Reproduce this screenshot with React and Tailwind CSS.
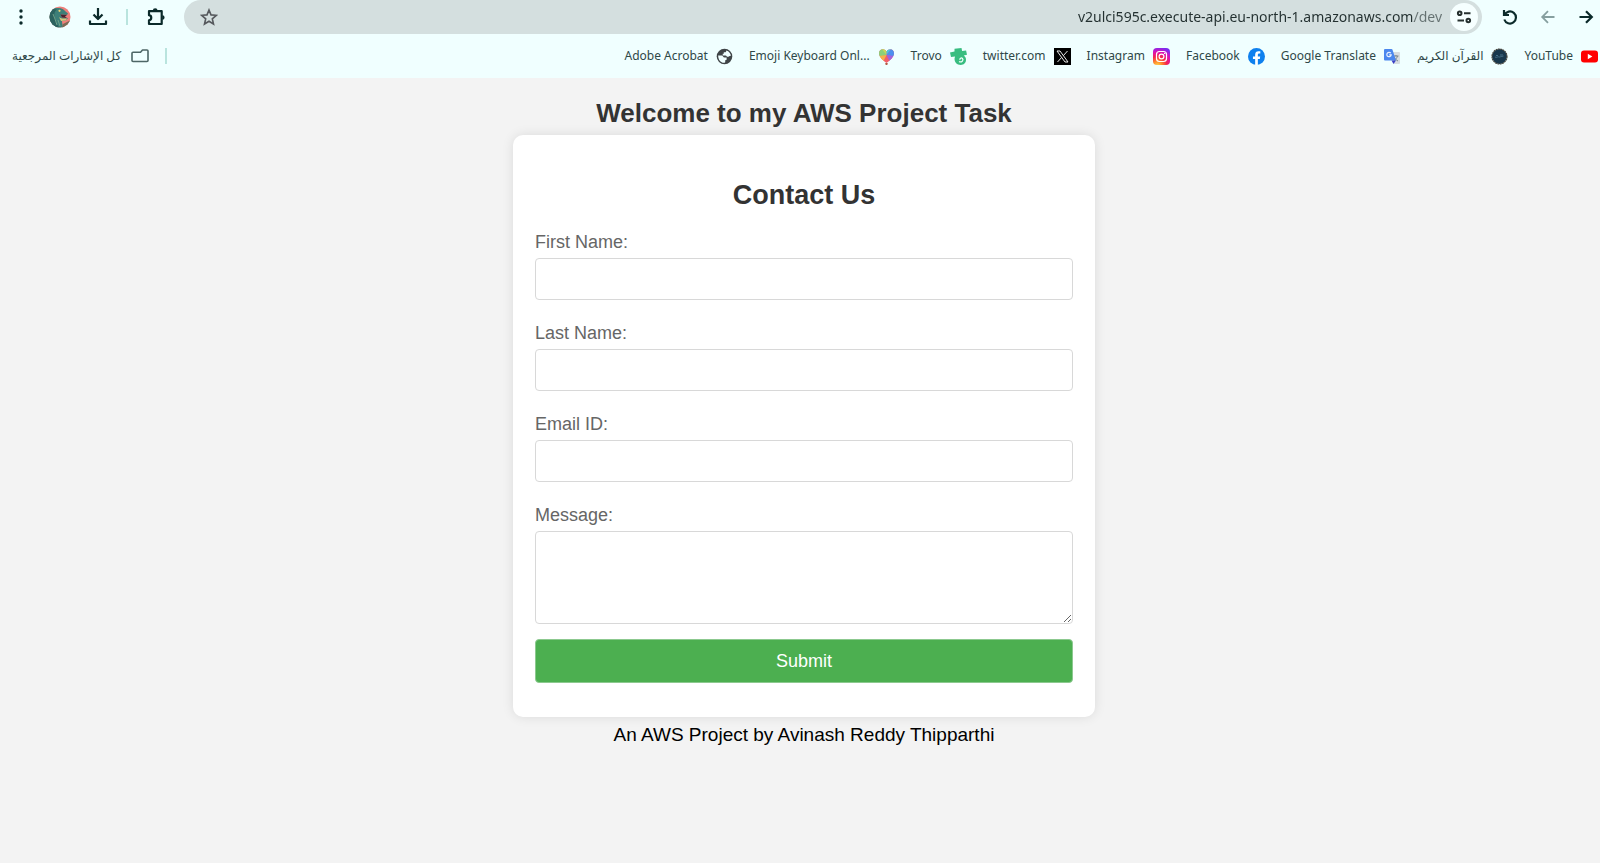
import React from "react";

const iconButton = "flex h-7 w-7 shrink-0 items-center justify-center rounded-full";

function DotsIcon() {
  return (
    <svg width="20" height="20" viewBox="0 0 20 20" fill="#0b2a2a">
      <circle cx="10" cy="4" r="1.7" />
      <circle cx="10" cy="10" r="1.7" />
      <circle cx="10" cy="16" r="1.7" />
    </svg>
  );
}

function AvatarIcon() {
  return (
    <svg width="22" height="22" viewBox="0 0 22 22">
      <defs>
        <clipPath id="avatar-clip">
          <circle cx="11" cy="11" r="10.5" />
        </clipPath>
      </defs>
      <g clipPath="url(#avatar-clip)">
        <rect width="22" height="22" fill="#ee7f7a" />
        <path d="M0 22V7C1 4 4 2 8 2c4-.5 7 1 8 3l3 2.500-1 1.500-6-.500 1 3 6 .500-2 2.500-4 .5c0 3 1 4 1 7z" fill="#3d7f78" />
        <path d="M0 7l4-4 4 .500C5 6 5 8 6 12l4 10H0z" fill="#2c625f" />
        <path d="M11.500 8.500l6.500.500-2 1.500 2 1.500-5-.500z" fill="#4a2430" />
        <path d="M10 11c2 2 4 1.500 8 1.500l-1 2-5 .500z" fill="#d8c27c" />
        <path d="M4 8l2 5 2 6M9 14l2 6" stroke="#6fa089" strokeWidth="1" fill="none" />
        <circle cx="10.500" cy="4.800" r="1.100" fill="#f0d470" />
        <path d="M14 18l8-4v8h-9z" fill="#7b6b56" />
      </g>
    </svg>
  );
}

function DownloadIcon() {
  return (
    <svg width="20" height="20" viewBox="0 0 20 20" fill="none" stroke="#0b2a2a" strokeWidth="2.200">
      <path d="M10 1v10.500M5.500 7.500l4.500 4.500 4.500-4.500M2 13.500V17h16v-3.500" strokeLinejoin="round" />
    </svg>
  );
}

function PuzzleIcon() {
  return (
    <svg width="20" height="20" viewBox="0 0 20 20">
      <path
        d="M3 4.200H15.700V17H3V13.300C6 12.900 6 8.600 3 8.200Z"
        fill="none"
        stroke="#0b2a2a"
        strokeWidth="2.200"
        strokeLinejoin="round"
      />
      <path d="M6.800 3.700a2.400 2.400 0 0 1 4.800 0ZM16.300 8.200a2.300 2.300 0 0 1 0 4.600Z" fill="#0b2a2a" />
    </svg>
  );
}

function StarIcon() {
  return (
    <svg width="18" height="18" viewBox="0 0 18 18" fill="none" stroke="#56595d" strokeWidth="1.600">
      <path d="M9 2l2 4.900 5.300.400-4 3.500 1.200 5.200L9 13.200 4.500 16l1.200-5.200-4-3.500L7 6.900z" />
    </svg>
  );
}

function TuneIcon() {
  return (
    <svg width="16" height="16" viewBox="0 0 16 16" fill="none" stroke="#26302f" strokeWidth="2">
      <circle cx="3.700" cy="4.300" r="1.800" />
      <path d="M8 4.300h6.500M1.500 11.500H8" />
      <circle cx="12.300" cy="11.500" r="1.800" />
    </svg>
  );
}

function ReloadIcon() {
  return (
    <svg width="18" height="18" viewBox="0 0 18 18" fill="none" stroke="#0b2a2a" strokeWidth="2.200">
      <path d="M3 2v5h5M3.500 7A6 6 0 1 1 3.300 11.500" />
    </svg>
  );
}

function ArrowIcon({ back }) {
  return back ? (
    <svg width="16" height="16" viewBox="0 0 16 16" fill="none" stroke="#869f9f" strokeWidth="1.800">
      <path d="M14.500 8H2.500M8 2.200L2.200 8 8 13.800" />
    </svg>
  ) : (
    <svg width="16" height="16" viewBox="0 0 16 16" fill="none" stroke="#0b2a2a" strokeWidth="2.200">
      <path d="M1.500 8h12M8 2.200L13.800 8 8 13.800" />
    </svg>
  );
}

function FolderIcon() {
  return (
    <svg width="18" height="14" viewBox="0 0 18 14" fill="none" stroke="#4d6666" strokeWidth="1.600">
      <path d="M2 3.200h7.500L11.500 1H16q1 0 1 1v9.500q0 1-1 1H2q-1 0-1-1V4.200q0-1 1-1z" strokeLinejoin="round" />
    </svg>
  );
}

function GlobeIcon() {
  return (
    <svg width="17" height="17" viewBox="0 0 24 24">
      <circle cx="12" cy="12" r="11" fill="#3f4447" />
      <path
        d="M3 10.500h5c2 0 2 3 4 3h3v2.500c0 1-1 1-2 1.500v2.500c-1 1-3 1-5 0C5 18.500 3 15 3 10.500zM14.500 3.500c0 1.500-.500 2.500-2 2.500H11v2H9.500v2.500h4c1.500 0 1.500 2 3 2 2 0 2-1.500 4.500-1.500 0-3-2.500-6.500-6.500-7.500z"
        fill="#f0ffff"
      />
    </svg>
  );
}

function HeartIcon() {
  return (
    <svg width="17" height="17" viewBox="0 0 17 17">
      <defs>
        <clipPath id="heart-clip">
          <path d="M8.500 15C5 12.500 1 9 1 5.200 1 .500 6.700 0 8.500 3.400 10.300 0 16 .500 16 5.200 16 9 12 12.500 8.500 15z" />
        </clipPath>
      </defs>
      <g clipPath="url(#heart-clip)">
        <rect width="17" height="17" fill="#f2606a" />
        <path d="M8.500 7L0 9V0h5z" fill="#8bd17a" />
        <path d="M8.500 7L3 0h6z" fill="#c5d95a" />
        <path d="M8.500 7V0H14z" fill="#45c5e8" />
        <path d="M8.500 7L14 0h3v9z" fill="#4c8ff0" />
        <path d="M8.500 7L17 8l-5 6z" fill="#a064dc" />
        <path d="M8.500 7L0 8v5l5 1z" fill="#f6b04a" />
      </g>
      <path d="M7.200 15h2.600l-.500 2H7.700z" fill="#b25b45" />
    </svg>
  );
}

function TrovoIcon() {
  return (
    <svg width="17" height="17" viewBox="0 0 17 17">
      <path
        d="M4.500.800L11.500 0l.600 3 4-.400.900 4.200-3.300.800C15.500 8.800 16 10 16 11.800c0 3.200-2.300 5.200-5.200 5.200-3.800 0-6.300-2.700-6.300-6.200L5 8.500 1 9 0 4.500l4.500-.900z"
        fill="#38bd80"
      />
      <path d="M9 13.500c2.500 1.500 5-1.300 3.500-3-1.200-1.200-3.200 0-2.400 1.400" fill="none" stroke="#effffc" strokeWidth="1.200" />
    </svg>
  );
}

function XIcon() {
  return (
    <svg width="17" height="17" viewBox="0 0 17 17">
      <rect width="17" height="17" fill="#000" />
      <path d="M3 3h3l8 11h-3zM13.500 3L9.300 7.700M7.600 9.500L3.500 14" fill="none" stroke="#e8e8e8" strokeWidth="1" />
    </svg>
  );
}

function InstagramIcon() {
  return (
    <svg width="17" height="17" viewBox="0 0 17 17">
      <defs>
        <radialGradient id="ig" cx="0.270" cy="1.050" r="1.100">
          <stop offset="0" stopColor="#ffd84d" />
          <stop offset="0.250" stopColor="#ff8a2b" />
          <stop offset="0.500" stopColor="#f5244e" />
          <stop offset="0.750" stopColor="#dc10b4" />
          <stop offset="1" stopColor="#7a2cf0" />
        </radialGradient>
      </defs>
      <rect width="17" height="17" rx="4" fill="url(#ig)" />
      <g fill="none" stroke="#fff" strokeWidth="1.200">
        <rect x="3.500" y="3.500" width="10" height="10" rx="3" />
        <circle cx="8.500" cy="8.500" r="2.400" />
      </g>
      <circle cx="11.600" cy="5.400" r=".7" fill="#fff" />
    </svg>
  );
}

function FacebookIcon() {
  return (
    <svg width="17" height="17" viewBox="0 0 24 24">
      <circle cx="12" cy="12" r="12" fill="#0f80ee" />
      <path
        d="M16.700 15.500l.500-3.500h-3.300V9.800c0-1 .500-1.900 2-1.900h1.500V4.900s-1.400-.200-2.700-.200c-2.800 0-4.600 1.700-4.600 4.700V12H7v3.500h3.100V24h3.800v-8.500z"
        fill="#fff"
      />
    </svg>
  );
}

function TranslateIcon() {
  return (
    <svg width="17" height="17" viewBox="0 0 17 17">
      <path d="M7 4h8q1 0 1 1v10q0 1-1 1H10z" fill="#d7dce0" />
      <path d="M9.500 8h5M12 7v1M13.500 8c-.500 2-2 3.500-3.500 4.500M10.500 9.500c.500 1.500 2 2.700 3.500 3.500" stroke="#7a858c" strokeWidth="1" fill="none" />
      <path d="M1 1h6.500q.700 0 1 .800L12 12.500H1q-1 0-1-1V2q0-1 1-1z" fill="#4b87ee" />
      <path d="M7.500 12.500H12L9.500 16z" fill="#3b3fc4" />
      <path d="M6.800 5.200A2.200 2.200 0 1 0 7.200 6.900H5.200" stroke="#e9f1ff" strokeWidth="1.200" fill="none" />
    </svg>
  );
}

function QuranIcon() {
  return (
    <svg width="17" height="17" viewBox="0 0 17 17">
      <circle cx="8.500" cy="8.500" r="7.500" fill="#18374c" />
      <circle cx="8.500" cy="8.500" r="7.500" fill="none" stroke="#4a463c" strokeWidth="1.200" strokeDasharray="1.800 0.600" />
      <path d="M4 9.500c1-1 1.500.500 2.500-.500s1 .500 2 0 1 0 2-.500 1 .500 2-.500M5 7.500h2M9 7h3" fill="none" stroke="#527c94" strokeWidth=".8" />
    </svg>
  );
}

function YouTubeIcon() {
  return (
    <svg width="17" height="17" viewBox="0 0 17 17">
      <rect y="2.500" width="17" height="12" rx="3" fill="#f00" />
      <path d="M6.800 5.800v5.400l4.600-2.700z" fill="#fff" />
    </svg>
  );
}

const bookmarks = [
  { label: "Adobe Acrobat", Icon: GlobeIcon },
  { label: "Emoji Keyboard Onl...", Icon: HeartIcon },
  { label: "Trovo", Icon: TrovoIcon },
  { label: "twitter.com", Icon: XIcon },
  { label: "Instagram", Icon: InstagramIcon },
  { label: "Facebook", Icon: FacebookIcon },
  { label: "Google Translate", Icon: TranslateIcon },
  { label: "القرآن الكريم", Icon: QuranIcon, rtl: true },
  { label: "YouTube", Icon: YouTubeIcon },
];

function BrowserBar() {
  return (
    <header className="bg-[#f0ffff] font-['Noto_Sans','DejaVu_Sans',sans-serif] text-[#2f4848]">
      <div className="flex h-[34px] items-center pl-[7px]">
        <button type="button" aria-label="Menu" className={iconButton}><DotsIcon /></button>
        <button type="button" aria-label="Profile" className={`${iconButton} ml-[11px]`}><AvatarIcon /></button>
        <button type="button" aria-label="Downloads" className={`${iconButton} ml-2.5`}><DownloadIcon /></button>
        <span className="ml-3.5 h-4 w-0.5 shrink-0 bg-[#b9e4de]" />
        <button type="button" aria-label="Extensions" className={`${iconButton} ml-3.5`}><PuzzleIcon /></button>
        <div className="ml-3.5 flex h-full min-w-0 flex-1 items-center rounded-full bg-[#d4dfdf] pr-1 pl-[11px]">
          <button type="button" aria-label="Bookmark this page" className={iconButton}><StarIcon /></button>
          <input
            type="text"
            aria-label="Address"
            defaultValue="v2ulci595c.execute-api.eu-north-1.amazonaws.com/dev"
            className="min-w-0 flex-1 bg-[linear-gradient(to_left,#657171_28px,#233030_28px)] bg-clip-text text-right text-sm text-transparent outline-none"
          />
          <button type="button" aria-label="Site information" className={`${iconButton} ml-2 bg-[#f6ffff]`}><TuneIcon /></button>
        </div>
        <button type="button" aria-label="Reload" className={`${iconButton} ml-3.5`}><ReloadIcon /></button>
        <button type="button" aria-label="Back" className={`${iconButton} ml-2.5`}><ArrowIcon back /></button>
        <button type="button" aria-label="Forward" className={`${iconButton} ml-2.5`}><ArrowIcon /></button>
      </div>
      <nav aria-label="Bookmarks" className="flex h-11 items-center justify-between pr-0.5 pl-3 text-xs">
        <div className="flex items-center">
          <button type="button" className="flex items-center gap-2.5 whitespace-nowrap">
            <span dir="rtl">كل الإشارات المرجعية</span>
            <FolderIcon />
          </button>
          <span className="ml-4 h-4 w-0.5 bg-[#b9e4de]" />
        </div>
        <ul className="flex items-center gap-4">
          {bookmarks.map(({ label, Icon, rtl }) => (
            <li key={label}>
              <a href="#" className="flex items-center gap-2 whitespace-nowrap">
                <span dir={rtl ? "rtl" : "ltr"}>{label}</span>
                <Icon />
              </a>
            </li>
          ))}
        </ul>
      </nav>
    </header>
  );
}

const fields = [
  { id: "first-name", label: "First Name:", type: "text" },
  { id: "last-name", label: "Last Name:", type: "text" },
  { id: "email", label: "Email ID:", type: "email" },
];

export default function App() {
  return (
    <div className="flex min-h-screen flex-col bg-[#f3f3f3]">
      <BrowserBar />
      <main className="flex flex-col items-center pt-5 pl-2 font-['Liberation_Sans',Arial,sans-serif]">
        <h1 className="text-[26px] leading-[30px] font-bold text-[#333]">Welcome to my AWS Project Task</h1>
        <form
          className="mt-[7px] w-full max-w-[582px] rounded-[10px] bg-white px-[22px] pt-11 pb-[34px] shadow-[0_0_12px_rgba(0,0,0,0.1)]"
          onSubmit={(e) => e.preventDefault()}
        >
          <h2 className="mb-5 text-center text-[27px] leading-8 font-bold text-[#333]">Contact Us</h2>
          {fields.map(({ id, label, type }) => (
            <div key={id} className="mb-[22px]">
              <label htmlFor={id} className="mb-[5px] block text-lg leading-[22px] text-[#666]">{label}</label>
              <input id={id} type={type} className="block h-[42px] w-full rounded-[4px] border border-[#d8d8d8] px-3 text-base" />
            </div>
          ))}
          <label htmlFor="message" className="mb-[5px] block text-lg leading-[22px] text-[#666]">Message:</label>
          <textarea id="message" className="block h-[93px] w-full resize rounded-[4px] border border-[#d8d8d8] p-3 text-base" />
          <button type="submit" className="mt-[15px] block h-11 w-full rounded-[4px] border border-[#8cc98f] bg-[#4caf50] text-lg text-white">
            Submit
          </button>
        </form>
        <p className="mt-1 text-[19px] leading-7 text-black">An AWS Project by Avinash Reddy Thipparthi</p>
      </main>
    </div>
  );
}
